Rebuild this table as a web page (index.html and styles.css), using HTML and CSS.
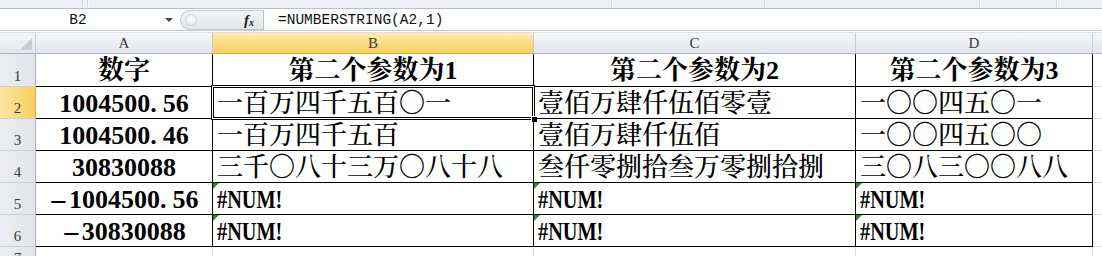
FILE: index.html
```html
<!DOCTYPE html>
<html lang="zh-CN">
<head>
<meta charset="utf-8">
<title>NUMBERSTRING</title>
<link rel="stylesheet" href="styles.css">
</head>
<body>
<div class="ribbon">
  <span class="rg w83"></span><span class="rg w5"></span><span class="rg w523"></span><span class="rg w152"></span><span class="rg w214"></span><span class="rg w76"></span><span class="rg rest"></span>
</div>
<div class="fbar">
  <div class="namebox">
    <span class="nb-text">B2</span>
    <span class="nb-arrow"></span>
  </div>
  <div class="fxwrap">
    <span class="fx-knob"></span>
    <span class="fx">f<sub>x</sub></span>
  </div>
  <div class="formula">=NUMBERSTRING(A2,1)</div>
</div>
<div class="fgap"></div>
<div class="sheet">
  <div class="corner"><svg width="12" height="12" viewBox="0 0 12 12"><polygon points="12,0 12,12 0,12" fill="#c9cdd3"/></svg></div>
  <div class="ch">A</div>
  <div class="ch sel-col">B</div>
  <div class="ch">C</div>
  <div class="ch">D</div>
  <div class="ch ch-e"></div>

  <div class="rh">1</div>
  <div class="c ctr hd">数字</div>
  <div class="c ctr hd">第二个参数为1</div>
  <div class="c ctr hd">第二个参数为2</div>
  <div class="c ctr hd">第二个参数为3</div>
  <div class="e"></div>

  <div class="rh sel-row">2</div>
  <div class="c ctr num">1004500<span class="dot">.</span>56</div>
  <div class="c active">一百万四千五百〇一<span class="sel"></span><span class="handle"></span></div>
  <div class="c">壹佰万肆仟伍佰零壹</div>
  <div class="c">一〇〇四五〇一</div>
  <div class="e"></div>

  <div class="rh">3</div>
  <div class="c ctr num">1004500<span class="dot">.</span>46</div>
  <div class="c">一百万四千五百</div>
  <div class="c">壹佰万肆仟伍佰</div>
  <div class="c">一〇〇四五〇〇</div>
  <div class="e"></div>

  <div class="rh">4</div>
  <div class="c ctr num">30830088</div>
  <div class="c">三千〇八十三万〇八十八</div>
  <div class="c">叁仟零捌拾叁万零捌拾捌</div>
  <div class="c">三〇八三〇〇八八</div>
  <div class="e"></div>

  <div class="rh">5</div>
  <div class="c ctr num"><span class="minus">-</span>1004500<span class="dot">.</span>56</div>
  <div class="c err"><span class="etxt">#NUM!</span></div>
  <div class="c err"><span class="etxt">#NUM!</span></div>
  <div class="c err"><span class="etxt">#NUM!</span></div>
  <div class="e"></div>

  <div class="rh">6</div>
  <div class="c ctr num"><span class="minus">-</span>30830088</div>
  <div class="c err"><span class="etxt">#NUM!</span></div>
  <div class="c err"><span class="etxt">#NUM!</span></div>
  <div class="c err"><span class="etxt">#NUM!</span></div>
  <div class="e"></div>

  <div class="rh rh7">7</div>
  <div class="g"></div>
  <div class="g"></div>
  <div class="g"></div>
  <div class="g"></div>
  <div class="g"></div>
</div>
</body>
</html>
```
FILE: styles.css
```css
* { box-sizing: border-box; }
html, body { margin: 0; padding: 0; }
body {
  width: 1102px;
  height: 256px;
  overflow: hidden;
  background: #fff;
  font-family: "Liberation Serif", "Noto Serif CJK SC", "Noto Sans CJK SC", serif;
  color: #000;
}

/* ribbon bottom strip */
.ribbon {
  display: flex;
  height: 9px;
  background: #eef0f3;
  border-bottom: 1px solid #b9c0ca;
}
.rg { height: 7px; border-right: 1px solid #d3d7dd; box-shadow: 1px 0 0 #fbfbfc; }
.w83 { width: 83px; }
.w5 { width: 5px; }
.w523 { width: 524px; }
.w152 { width: 153px; }
.w214 { width: 215px; }
.w76 { width: 77px; }
.rest { flex: 1; border-right: none; box-shadow: none; }

/* formula bar */
.fbar {
  display: flex;
  height: 21px;
  background: #fff;
  align-items: stretch;
}
.namebox {
  width: 180px;
  display: flex;
  align-items: center;
}
.nb-text {
  width: 156px;
  text-align: center;
  font-family: "Liberation Mono", "Noto Sans CJK SC", monospace;
  font-size: 14.5px;
  color: #111;
}
.nb-arrow {
  margin-left: 9px;
  width: 0;
  height: 0;
  border-left: 4px solid transparent;
  border-right: 4px solid transparent;
  border-top: 4px solid #444;
}
.fxwrap {
  width: 84px;
  display: flex;
  align-items: center;
  justify-content: space-between;
  padding: 0 9px 0 4px;
  background: linear-gradient(#f3f4f6, #e3e6ea);
  border: 1px solid #c4cad2;
  border-right: 1px solid #b8bfc8;
  border-radius: 10px 0 0 10px;
  margin: 1px 0 0 0;
}
.fx-knob {
  width: 12px;
  height: 12px;
  border-radius: 50%;
  background: radial-gradient(circle at 50% 35%, #ffffff, #dfe3e8);
  border: 1px solid #cfd4da;
}
.fx {
  font-family: "Liberation Serif", serif;
  font-style: italic;
  font-weight: bold;
  font-size: 15px;
  color: #222;
  line-height: 1;
}
.fx sub { font-size: 10px; vertical-align: -1px; }
.formula {
  flex: 1;
  display: flex;
  align-items: center;
  padding-left: 14px;
  font-family: "Liberation Mono", monospace;
  font-size: 14.5px;
  color: #111;
}
.fgap {
  height: 3px;
  background: #fff;
  border-top: 1px solid #c2c8d0;
  border-bottom: 1px solid #dde1e6;
}

/* sheet grid */
.sheet {
  display: grid;
  grid-template-columns: 36px 177px 321px 322px 237px 1fr;
  grid-template-rows: 21px 33px repeat(5, 32px) 1fr;
  height: 223px;
}
.corner {
  background: linear-gradient(#f4f5f7, #e4e7eb);
  border-right: 1px solid #c5cad1;
  border-bottom: 1px solid #a9b1bc;
  display: flex;
  align-items: flex-end;
  justify-content: flex-end;
  padding: 0 3px 3px 0;
}
.ch {
  background: linear-gradient(#f6f7f9, #e2e5ea);
  border-right: 1px solid #c5cad1;
  border-bottom: 1px solid #a9b1bc;
  display: flex;
  align-items: flex-end;
  justify-content: center;
  padding-bottom: 1px;
  font-family: "Liberation Serif", serif;
  font-size: 15px;
  color: #3a3a3a;
}
.ch.sel-col {
  background: linear-gradient(#fdebb0, #f8cf5e);
  border-bottom: 1px solid #e9a93a;
  border-right: 1px solid #c5cad1;
}
.ch-e { border-right: none; }
.rh {
  background: linear-gradient(90deg, #eceef1, #e1e4e8);
  border-right: 1px solid #a9b1bc;
  border-bottom: 1px solid #c9ced5;
  display: flex;
  align-items: flex-end;
  justify-content: center;
  padding-bottom: 1px;
  font-family: "Liberation Serif", serif;
  font-size: 15px;
  color: #3a3a3a;
}
.rh.sel-row {
  background: linear-gradient(90deg, #fde6a3, #f8cf5e);
  border-right: 1px solid #e9a93a;
}
.rh7 { align-items: flex-start; padding-top: 3px; border-bottom: none; }

.c {
  position: relative;
  border-right: 1px solid #000;
  border-bottom: 1px solid #000;
  display: flex;
  align-items: center;
  padding: 2px 0 0 4px;
  font-size: 26px;
  line-height: 1;
  white-space: nowrap;
  font-weight: 500;
}
.c.ctr { justify-content: center; padding-left: 0; }
.c.hd { font-weight: bold; }
.c.num { font-weight: bold; }
.dot { padding-right: 6px; }
.minus {
  display: inline-block;
  font-weight: normal;
  transform: scaleX(2.1);
  margin: 0 6px 0 5px;
}
.e { border-bottom: 1px solid #dadcdf; }
.g { border-right: 1px solid #dadcdf; }
.g:last-child { border-right: none; }

.etxt {
  display: inline-block;
  transform: scaleX(0.78);
  transform-origin: left center;
  font-weight: bold;
}
.err::before {
  content: "";
  position: absolute;
  top: 0;
  left: 0;
  border-top: 6px solid #2e8b2e;
  border-right: 6px solid transparent;
}

.sel {
  position: absolute;
  left: -2px;
  top: -2px;
  right: -2px;
  bottom: -2px;
  border: 1px solid #000;
  box-shadow: inset 0 0 0 1px #fff, inset 0 0 0 2px #000;
  pointer-events: none;
}
.handle {
  position: absolute;
  right: -5px;
  bottom: -5px;
  width: 7px;
  height: 7px;
  background: #000;
  border: 1px solid #fff;
}
```
